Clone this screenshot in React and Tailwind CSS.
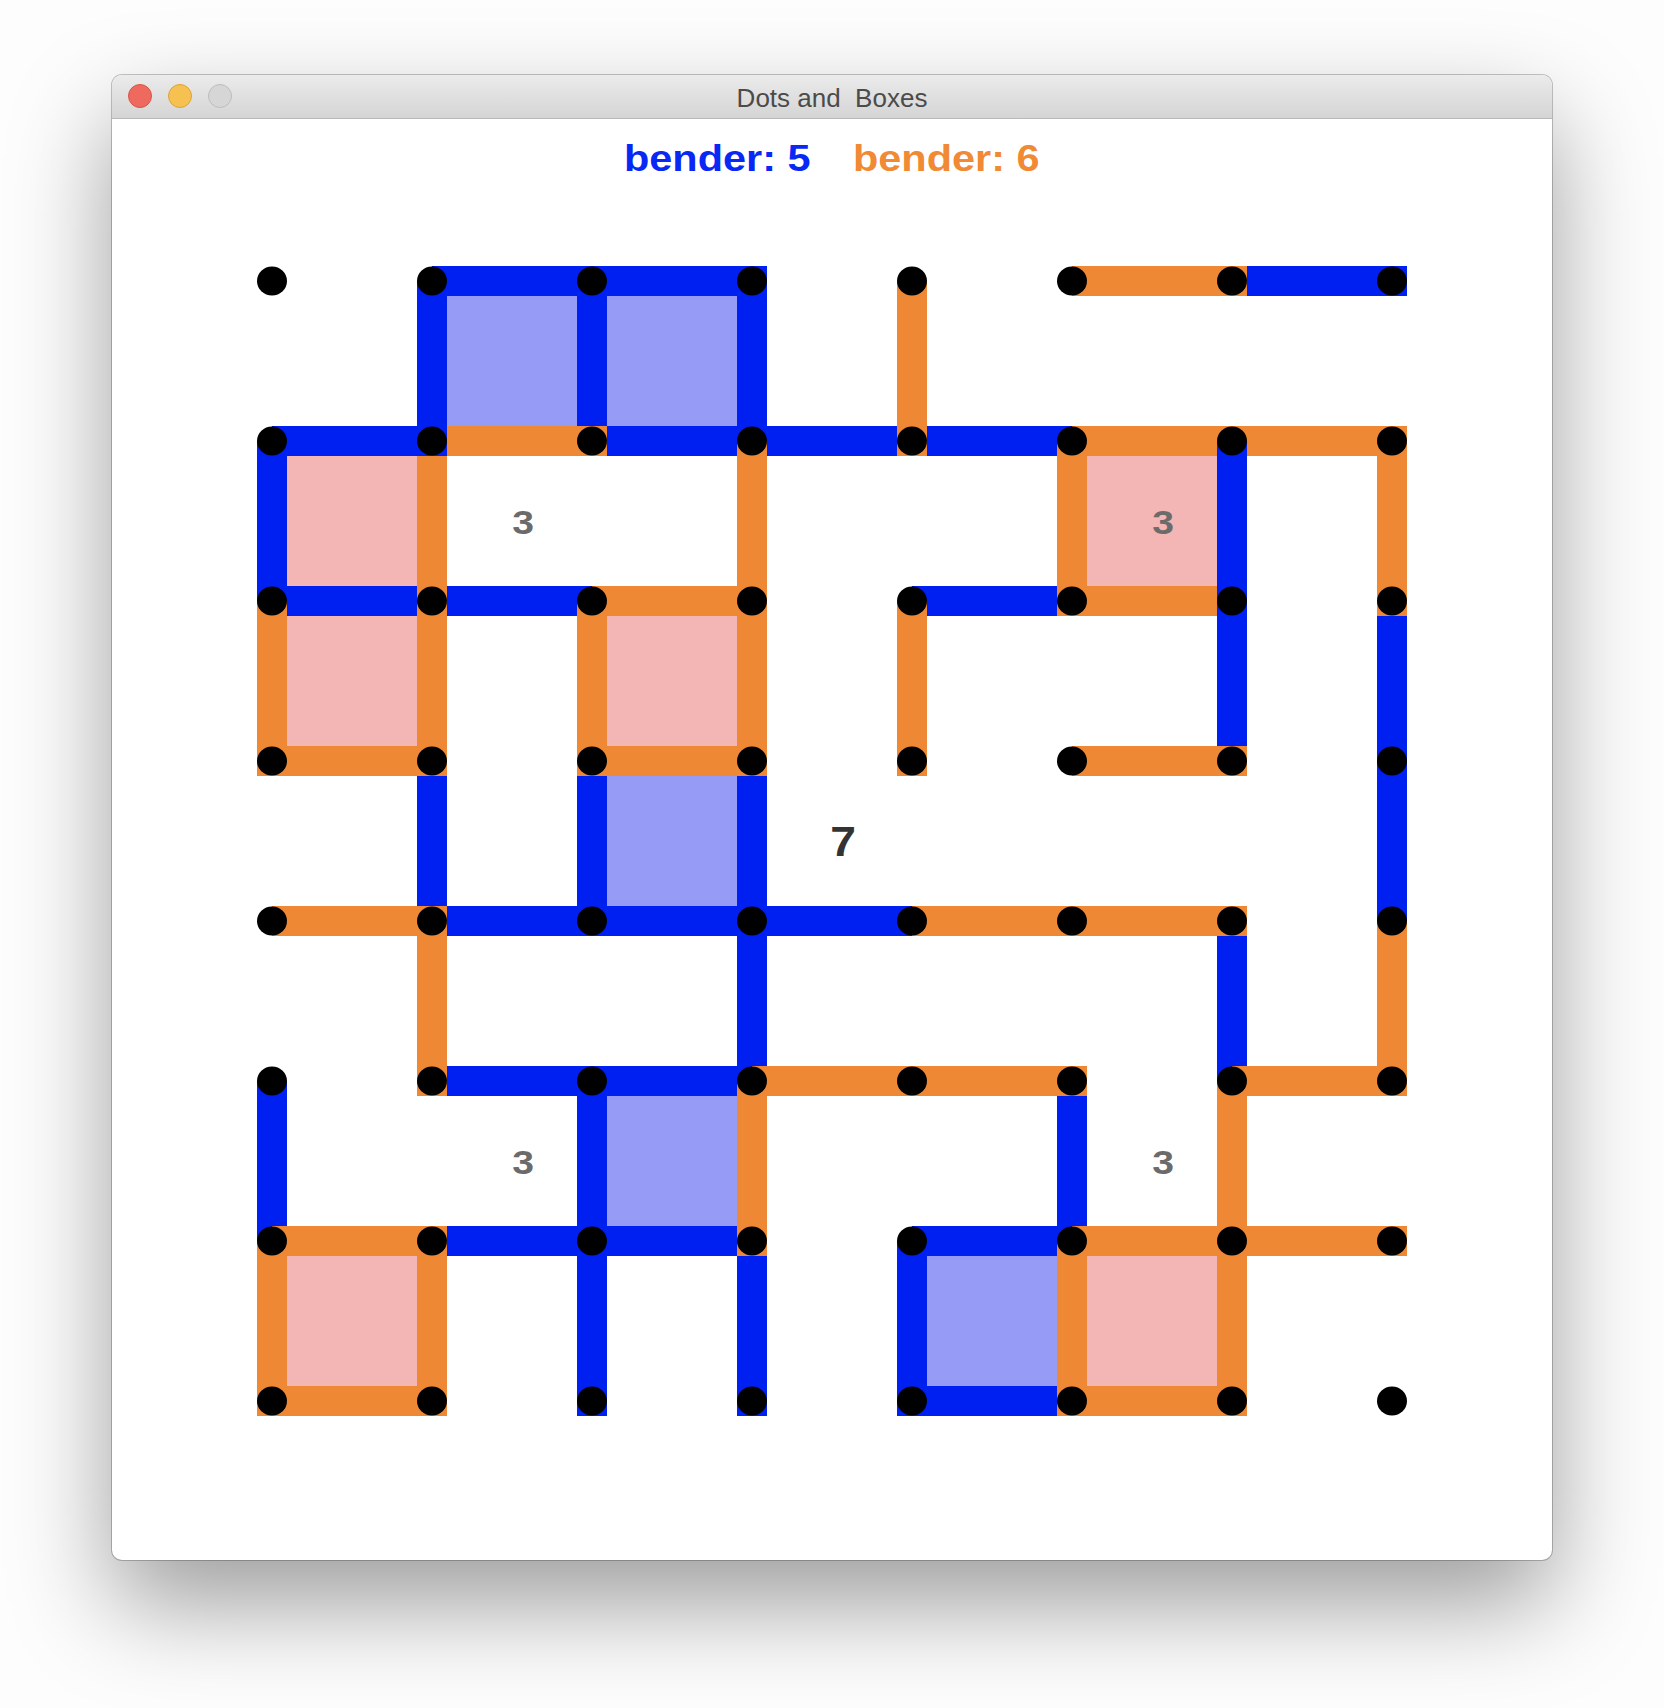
import React from "react";

const BLUE = "#0020f2";
const ORANGE = "#ef8834";
const LAVENDER = "#969bf5";
const PINK = "#f4b5b5";

const STEP = 160;
const PAD = 80;
const W = 30;
const X = (c) => PAD + c * STEP;

// horizontal lines: [row, col] from col to col+1
const hBlue = [[0,1],[0,2],[0,6],[1,2],[1,3],[1,4],[2,0],[2,1],[2,4],[4,1],[4,2],[4,3],[5,1],[5,2],[6,1],[6,2],[6,4],[7,4]];
const hOrange = [[0,5],[1,1],[1,5],[1,6],[2,2],[2,5],[3,0],[3,2],[3,5],[4,0],[4,4],[4,5],[5,3],[5,4],[5,6],[6,0],[6,5],[6,6],[7,0],[7,5]];
// vertical lines: [col, row] from row to row+1
const vBlue = [[1,0],[2,0],[3,0],[0,1],[6,2],[7,2],[1,3],[2,3],[3,3],[7,3],[3,4],[6,4],[0,5],[2,5],[5,5],[2,6],[3,6],[4,6]];
const vOrange = [[4,0],[1,1],[3,1],[5,1],[7,1],[0,2],[1,2],[2,2],[3,2],[4,2],[1,4],[7,4],[3,5],[6,5],[0,6],[1,6],[5,6],[6,6]];
// drawn last
const hLate = [[1,0]];
const vLate = [[6,1]];

const lavBoxes = [[1,0],[2,0],[2,3],[2,5],[4,6]];
const pinkBoxes = [[0,1],[5,1],[0,2],[2,2],[0,6],[5,6]];

function HLine({ r, c, color }) {
  return <rect x={X(c)} y={X(r) - W / 2} width={STEP + W / 2} height={W} fill={color} />;
}
function VLine({ c, r, color }) {
  return <rect x={X(c) - W / 2} y={X(r)} width={W} height={STEP + W / 2} fill={color} />;
}

function Board() {
  const dots = [];
  for (let r = 0; r < 8; r++)
    for (let c = 0; c < 8; c++)
      dots.push(<ellipse key={`${r}-${c}`} cx={X(c)} cy={X(r)} rx={15} ry={14.5} fill="#000" />);

  return (
    <svg width="1280" height="1280" viewBox="0 0 1280 1280" className="mx-auto mt-[24px] block">
      {lavBoxes.map(([c, r]) => (
        <rect key={`l${c}${r}`} x={X(c)} y={X(r)} width={STEP} height={STEP} fill={LAVENDER} />
      ))}
      {pinkBoxes.map(([c, r]) => (
        <rect key={`p${c}${r}`} x={X(c)} y={X(r)} width={STEP} height={STEP} fill={PINK} />
      ))}
      {hBlue.map(([r, c]) => <HLine key={`hb${r}${c}`} r={r} c={c} color={BLUE} />)}
      {vBlue.map(([c, r]) => <VLine key={`vb${c}${r}`} c={c} r={r} color={BLUE} />)}
      {hOrange.map(([r, c]) => <HLine key={`ho${r}${c}`} r={r} c={c} color={ORANGE} />)}
      {vOrange.map(([c, r]) => <VLine key={`vo${c}${r}`} c={c} r={r} color={ORANGE} />)}
      {hLate.map(([r, c]) => <HLine key={`hl${r}${c}`} r={r} c={c} color={BLUE} />)}
      {vLate.map(([c, r]) => <VLine key={`vl${c}${r}`} c={c} r={r} color={BLUE} />)}
      {dots}

      {[[1,1],[5,1],[1,5],[5,5]].map(([c, r]) => (
        <text
          key={`n${c}${r}`}
          transform={`translate(${X(c) + 91} ${X(r) + 92.5}) scale(1.15 1)`}
          textAnchor="middle"
          fontFamily="'Liberation Sans', Arial, sans-serif"
          fontWeight="700"
          fontSize="34"
          fill="#6b6b6b"
        >
          3
        </text>
      ))}
      <text
        transform={`translate(${X(3) + 91} ${X(3) + 95}) scale(1.1 1)`}
        textAnchor="middle"
        fontFamily="'Liberation Sans', Arial, sans-serif"
        fontWeight="700"
        fontSize="42"
        fill="#333"
      >
        7
      </text>
    </svg>
  );
}

export default function App() {
  return (
    <div className="h-[1708px] w-[1664px] overflow-hidden bg-[#fdfdfd] pt-[75px]">
      <div className="mx-auto h-[1485px] w-[1440px] overflow-hidden rounded-[10px] bg-white shadow-[0_44px_100px_rgba(0,0,0,0.38),0_0_0_1px_rgba(0,0,0,0.22)]">
        {/* title bar */}
        <div className="relative flex h-[44px] items-center justify-center border-b border-[#b9b9b9] bg-gradient-to-b from-[#ebebeb] to-[#d5d5d5]">
          <div className="absolute left-[16px] top-[9px] flex gap-[16px]">
            <span className="h-[24px] w-[24px] rounded-full border border-[#d9544a] bg-[#ee6a5e]" />
            <span className="h-[24px] w-[24px] rounded-full border border-[#dba43a] bg-[#f6c150]" />
            <span className="h-[24px] w-[24px] rounded-full border border-[#bcbcbc] bg-[#d6d6d6]" />
          </div>
          <span
            className="mt-[2px] whitespace-pre text-[26px] leading-[44px] text-[#4b4b4b]"
            style={{ fontFamily: "'Liberation Sans', Arial, sans-serif" }}
          >
            Dots and  Boxes
          </span>
        </div>

        {/* scores */}
        <div
          className="mt-[22px] flex justify-center gap-[62px] text-[37px] font-bold leading-[36px]"
          style={{ fontFamily: "'Liberation Sans', Arial, sans-serif" }}
        >
          <span className="inline-block scale-x-[1.12] text-[#0a28f5]">bender: 5</span>
          <span className="inline-block scale-x-[1.12] text-[#f08a35]">bender: 6</span>
        </div>

        <Board />
      </div>
    </div>
  );
}
